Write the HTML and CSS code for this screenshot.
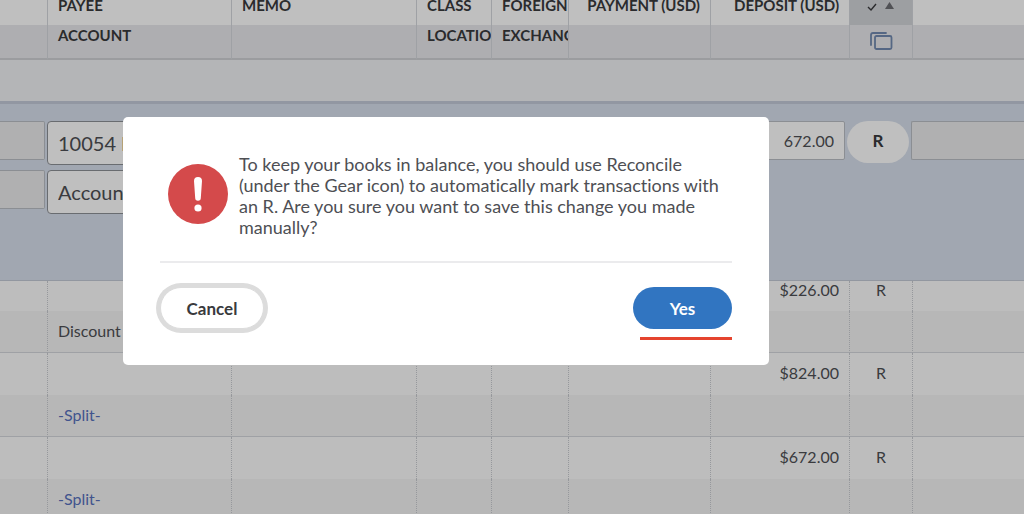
FILE: index.html
```html
<!DOCTYPE html>
<html lang="en">
<head>
    <meta charset="UTF-8">
    <meta name="viewport" content="width=device-width, initial-scale=1.0">
    <title>Account register</title>
    <link rel="stylesheet" href="styles.css">
</head>
<body>
    <table class="register">
        <colgroup>
            <col class="col-date">
            <col class="col-payee">
            <col class="col-memo">
            <col class="col-class">
            <col class="col-foreign">
            <col class="col-payment">
            <col class="col-deposit">
            <col class="col-status">
            <col>
        </colgroup>
        <thead>
            <tr class="head-main">
                <th></th>
                <th>PAYEE</th>
                <th>MEMO</th>
                <th>CLASS</th>
                <th>FOREIGN</th>
                <th class="num">PAYMENT (USD)</th>
                <th class="num">DEPOSIT (USD)</th>
                <th class="sorted">
                    <svg width="28" height="10" viewBox="0 0 28 10" aria-label="Status, sorted ascending">
                        <path d="M1 6l3 3 5-6" fill="none" stroke="#393a3d" stroke-width="1.4"/>
                        <path d="M18 8l4.500-7 4.500 7z" fill="#6b6c72"/>
                    </svg>
                </th>
                <th></th>
            </tr>
            <tr class="head-sub">
                <th></th>
                <th>ACCOUNT</th>
                <th></th>
                <th>LOCATION</th>
                <th>EXCHANGE</th>
                <th></th>
                <th></th>
                <th class="center">
                    <svg width="24" height="20" viewBox="0 0 24 20" fill="none" stroke="#728ab0" stroke-width="1.8" stroke-linecap="round" aria-label="Attachments">
                        <rect x="6" y="5" width="16.500" height="13" rx="1.500"/>
                        <path d="M2 14V4q0-2 2-2h13"/>
                    </svg>
                </th>
                <th></th>
            </tr>
        </thead>
        <tbody>
            <tr class="band">
                <td colspan="9"></td>
            </tr>
            <tr class="edit-row">
                <td colspan="9">
                    <div class="edit-grid">
                        <div class="fields">
                            <input class="field locked" type="text" aria-label="Date" readonly>
                            <input class="field locked" type="text" aria-label="Type" readonly>
                        </div>
                        <div class="fields">
                            <input class="field tall" type="text" aria-label="Payee" value="10054 B">
                            <input class="field tall" type="text" aria-label="Account" value="Account">
                        </div>
                        <input class="field" type="text" aria-label="Memo">
                        <input class="field" type="text" aria-label="Class">
                        <input class="field" type="text" aria-label="Foreign exchange">
                        <input class="field amount" type="text" aria-label="Payment">
                        <input class="field amount" type="text" aria-label="Deposit" value="672.00">
                        <button class="status-pill" type="button">R</button>
                        <input class="field locked last" type="text" aria-label="Balance" readonly>
                    </div>
                </td>
            </tr>
            <tr class="line-main first">
                <td></td><td></td><td></td><td></td><td></td><td></td>
                <td class="num">$226.00</td>
                <td class="center">R</td>
                <td></td>
            </tr>
            <tr class="line-sub">
                <td></td><td>Discount</td><td></td><td></td><td></td><td></td><td></td><td></td><td></td>
            </tr>
            <tr class="line-main">
                <td></td><td></td><td></td><td></td><td></td><td></td>
                <td class="num">$824.00</td>
                <td class="center">R</td>
                <td></td>
            </tr>
            <tr class="line-sub">
                <td></td><td><a href="#">-Split-</a></td><td></td><td></td><td></td><td></td><td></td><td></td><td></td>
            </tr>
            <tr class="line-main">
                <td></td><td></td><td></td><td></td><td></td><td></td>
                <td class="num">$672.00</td>
                <td class="center">R</td>
                <td></td>
            </tr>
            <tr class="line-sub">
                <td></td><td><a href="#">-Split-</a></td><td></td><td></td><td></td><td></td><td></td><td></td><td></td>
            </tr>
        </tbody>
    </table>

    <div class="overlay">
        <div class="modal" role="alertdialog" aria-modal="true" aria-describedby="message">
            <div class="modal-body">
                <svg class="alert-icon" width="60" height="60" viewBox="0 0 60 60" aria-hidden="true">
                    <circle cx="30" cy="30" r="30" fill="#d44a4b"/>
                    <path d="M26 17a4 4 0 0 1 8 0l-1.200 17a2.800 2.800 0 0 1-5.600 0z" fill="#fff"/>
                    <circle cx="30" cy="44" r="3.600" fill="#fff"/>
                </svg>
                <p id="message">To keep your books in balance, you should use Reconcile (under the Gear icon) to automatically mark transactions with an R. Are you sure you want to save this change you made manually?</p>
            </div>
            <div class="modal-actions">
                <button class="btn btn-cancel" type="button">Cancel</button>
                <button class="btn btn-yes" type="button">Yes</button>
            </div>
        </div>
    </div>
</body>
</html>
```
FILE: styles.css
```css
* {
    margin: 0;
    padding: 0;
    box-sizing: border-box;
}

body {
    height: 100vh;
    overflow: hidden;
    background: #fff;
    color: #4e4f54;
    font-family: Lato, sans-serif;
    font-size: 16px;
    line-height: 18px;
    font-variant-ligatures: none;
}

button,
input {
    font-family: inherit;
    color: inherit;
}

/* Register, scrolled a little below its top edge */
.register {
    width: 100%;
    margin-top: -16px;
    table-layout: fixed;
    border-collapse: separate;
    border-spacing: 0;
}

.col-date { width: 48px; }
.col-payee { width: 184px; }
.col-memo { width: 185px; }
.col-class { width: 75px; }
.col-foreign { width: 77px; }
.col-payment { width: 142px; }
.col-deposit { width: 139px; }
.col-status { width: 63px; }

.register th,
.register td {
    padding: 0 10px;
    border-right: 1px solid #d4d7dc;
    text-align: left;
    white-space: nowrap;
    overflow: hidden;
}

.register th:last-child,
.register td:last-child {
    border-right: none;
}

.register th {
    padding-right: 0;
    font-size: 15px;
    font-weight: 700;
    color: #393a3d;
}

.register .num {
    text-align: right;
    padding-right: 10px;
}

.register .center,
.register .sorted {
    padding: 0;
    text-align: center;
}

.head-main th {
    height: 41px;
}

.head-main .sorted {
    background: #d2d4d8;
}

.head-sub th {
    height: 35px;
    padding-top: 1px;
    background: #e9e9ec;
    border-bottom: 2px solid #cfd1d5;
    vertical-align: top;
}

.head-sub svg {
    margin-top: 6px;
}

.band td {
    height: 41px;
    background: #f0f2f5;
}

.edit-row td {
    height: 180px;
    padding: 17px 0 0;
    background: #d7dfec;
    border-top: 3px solid #c3cad9;
    border-bottom: 1px solid #c3cad6;
    vertical-align: top;
}

.edit-grid {
    display: grid;
    grid-template-columns: 45px 184px 183px 73px 75px 138px 135px 62px 1fr;
    gap: 2px;
    align-items: start;
}

.fields {
    display: flex;
    flex-direction: column;
}

.field {
    width: 100%;
    height: 39px;
    padding: 0 10px;
    border: 1px solid #babec5;
    border-radius: 2px;
    background: #fff;
    font-size: 16px;
}

.field.locked {
    background: #ebebec;
    border-left: none;
    border-radius: 0 2px 2px 0;
}

.field.locked + .locked {
    margin-top: 10px;
}

.field.last {
    border-left: 1px solid #babec5;
    border-right: none;
    border-radius: 2px 0 0 2px;
}

.field.tall {
    height: 44px;
    border-color: #8d9096;
    border-radius: 4px;
    font-size: 20px;
}

.field.tall + .tall {
    margin-top: 5px;
}

.field.amount {
    text-align: right;
}

.status-pill {
    height: 42px;
    padding-bottom: 3px;
    border: none;
    border-radius: 21px;
    background: #fff;
    color: #393a3d;
    font-size: 17px;
    font-weight: 700;
}

.register tbody .line-main td,
.register tbody .line-sub td {
    border-right-style: dotted;
    border-right-color: #c9cbd0;
}

.register tbody .line-main td:last-child,
.register tbody .line-sub td:last-child {
    border-right: none;
}

.line-main td {
    height: 42px;
    padding-bottom: 2px;
    background: #fdfdfd;
}

.register .line-main td,
.register .line-sub td {
    padding-bottom: 2px;
}

.register .first td {
    height: 30px;
    padding-bottom: 12px;
}

.register .line-main.first td {
    height: 30px;
    padding-bottom: 12px;
}

.line-sub td {
    height: 42px;
    background: #f5f5f5;
    border-bottom: 1px solid #d4d7dc;
}

.line-sub a {
    color: #5771bd;
    text-decoration: none;
}

/* Confirmation message */
.overlay {
    position: fixed;
    inset: 0;
    padding: 117px 255px 0 123px;
    background: rgba(0, 0, 0, 0.25);
}

.modal {
    padding: 37px 37px 36px;
    border-radius: 5px;
    background: #fff;
}

.modal-body {
    display: flex;
    gap: 11px;
    padding: 0 8px 23px;
    border-bottom: 2px solid #ebebed;
}

.alert-icon {
    flex: none;
    margin-top: 10px;
}

.modal-body p {
    font-size: 18px;
    line-height: 21px;
}

.modal-actions {
    display: flex;
    justify-content: space-between;
    padding-top: 24px;
}

.btn {
    height: 42px;
    border-radius: 21px;
    font-size: 17px;
    font-weight: 700;
    cursor: pointer;
}

.btn-cancel {
    width: 104px;
    border: 1px solid #dcdcdc;
    box-shadow: 0 0 0 4px #dcdcdc;
    background: #fff;
    color: #393a3d;
}

.btn-yes {
    position: relative;
    width: 99px;
    border: none;
    background: #3175c1;
    color: #fff;
}

.btn-yes::after {
    content: '';
    position: absolute;
    right: 0;
    bottom: -11px;
    width: 92px;
    height: 3px;
    background: #e5442e;
}
```
